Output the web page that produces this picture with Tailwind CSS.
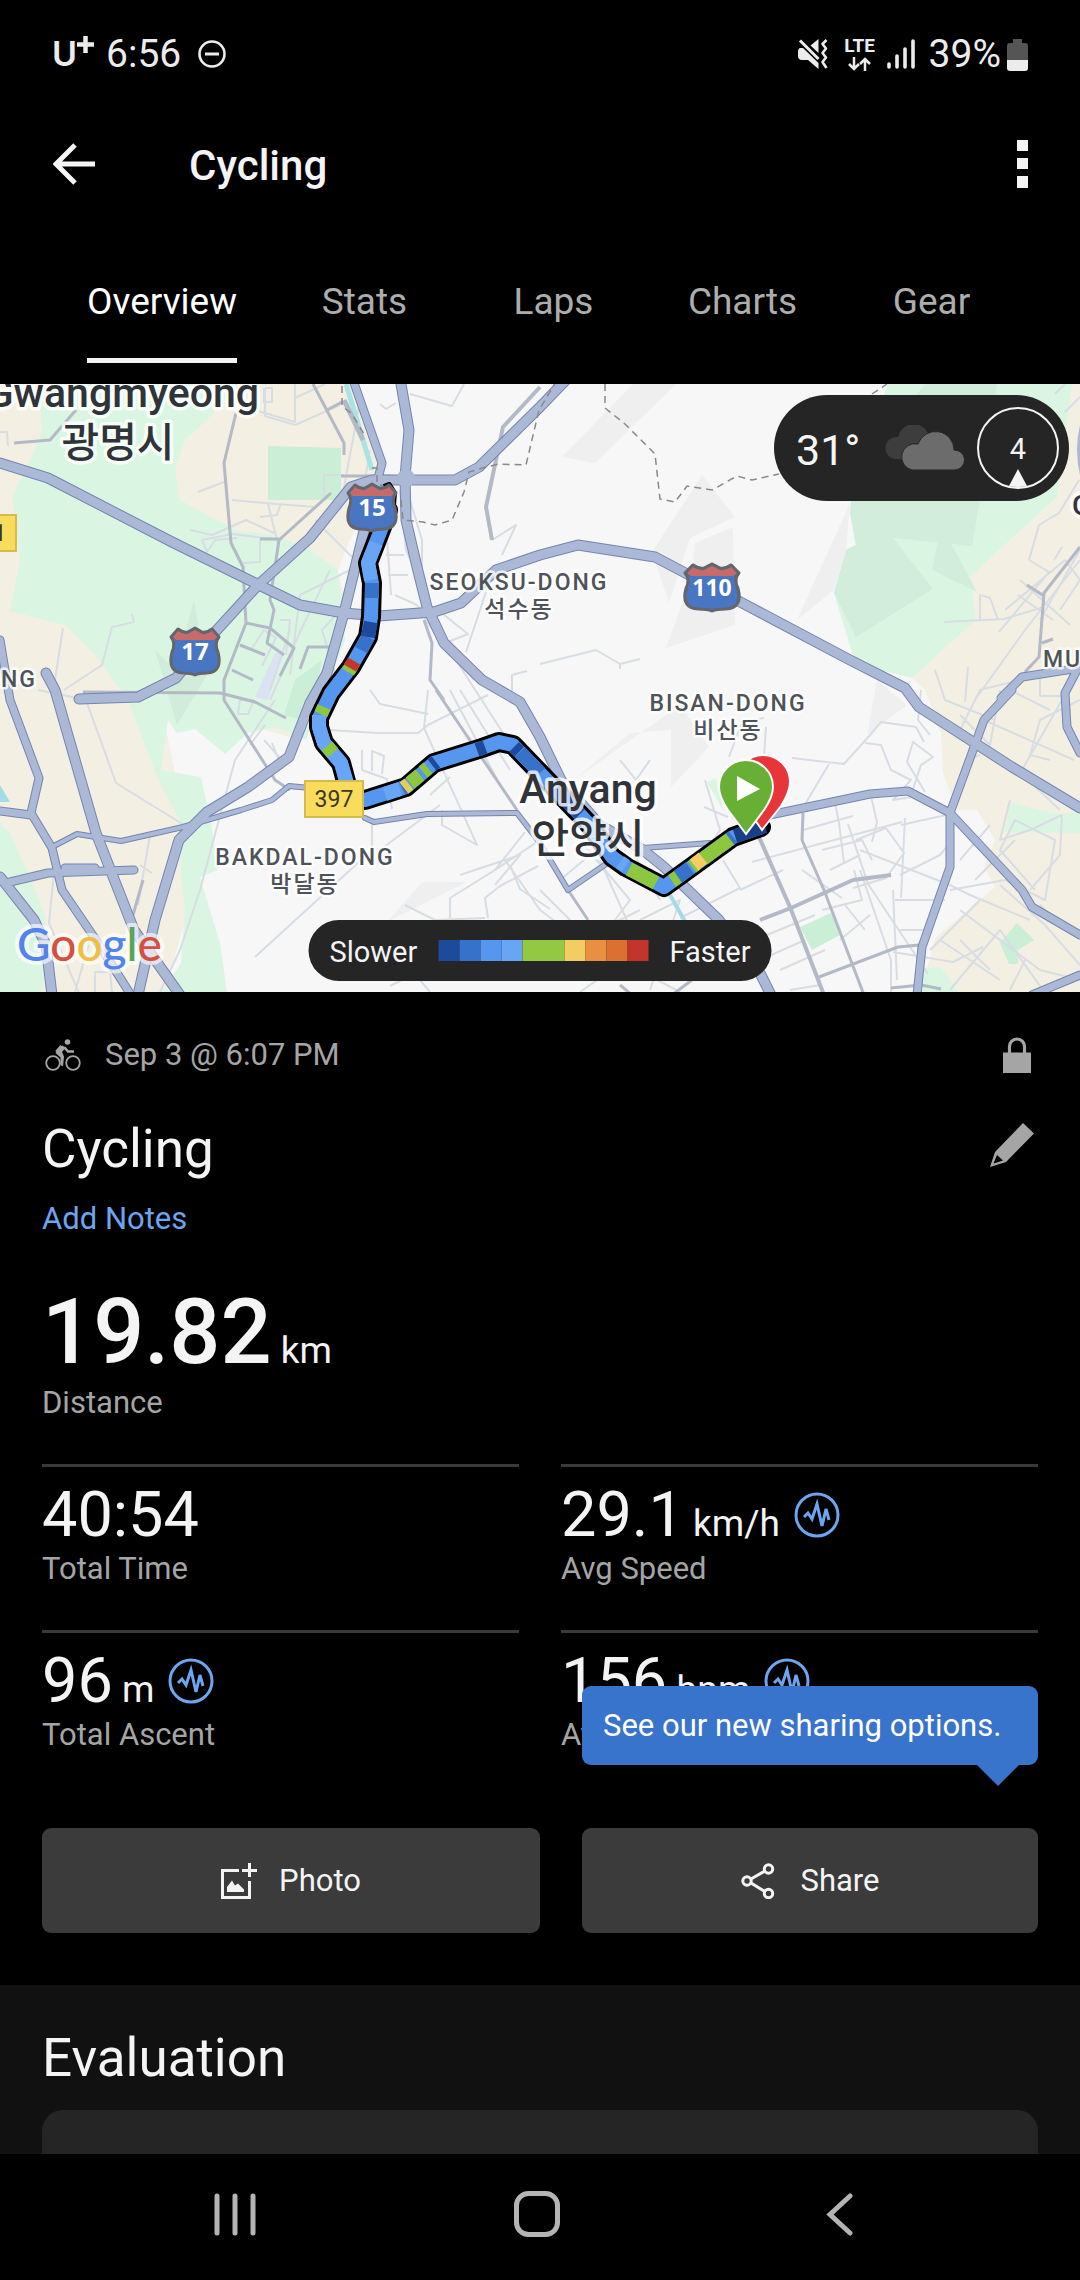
<!DOCTYPE html>
<html lang="en">
<head>
<meta charset="utf-8">
<meta name="viewport" content="width=device-width, initial-scale=1">
<title>Cycling</title>
<script src="https://cdn.jsdelivr.net/npm/@tailwindcss/browser@4"></script>
</head>
<body class="bg-black">
<div class="flex min-h-screen flex-col overflow-hidden bg-black font-[Roboto,'Noto_Sans_CJK_KR',sans-serif] text-[#f4f4f4]">

  <!-- Status bar -->
  <div class="flex h-[108px] items-center justify-between pl-[52px] pr-[52px] text-[39px] leading-[46px] text-[#ececec]">
    <div class="flex items-center">
      <span class="flex items-center font-[Inter,sans-serif] text-[34px] font-semibold">U<svg class="mb-5 size-[17px]" viewBox="0 0 17 17" aria-hidden="true"><path d="M8.500 0v17M0 8.500h17" stroke="#ececec" stroke-width="4.500"/></svg></span>
      <span class="ml-3">6:56</span>
      <svg class="ml-[17px] size-7" viewBox="0 0 28 28" fill="none" stroke="#ececec" aria-hidden="true"><circle cx="14" cy="14" r="12.500" stroke-width="2.600"/><path d="M7 14h14" stroke-width="3"/></svg>
    </div>
    <div class="flex items-center">
      <svg class="h-[30px] w-[30px]" viewBox="0 0 30 30" aria-hidden="true"><path d="M20.500 0v14L12.500 6.500zM2.500 9H5L20.500 24v6L10 21H4q-4 0-4-4v-4q0-4 2.500-4z" fill="#ececec"/><path d="M2 1.500l18.500 18.500" stroke="#ececec" stroke-width="3"/><path d="M28.500 1l-4 4 3.500 4.500-3.500 4.500 3.500 4.500-3.500 4.500 4 6" fill="none" stroke="#ececec" stroke-width="2.600" stroke-linejoin="round"/></svg>
      <div class="ml-4 flex w-[32px] flex-col items-center">
        <span class="text-[19px] font-bold leading-[16px]">LTE</span>
        <svg class="mt-[3px] h-[14px] w-[23px]" viewBox="0 0 23 14" fill="none" stroke="#ececec" stroke-width="2.500" aria-hidden="true"><path d="M6 0v12M1 7l5 5 5-5M17 14V2M12 7l5-5 5 5"/></svg>
      </div>
      <svg class="ml-[11px] h-[30px] w-7" viewBox="0 0 28 30" stroke="#ececec" stroke-width="3.600" stroke-linecap="round" aria-hidden="true"><path d="M2 25v3M10 17v11M18 10v18M26 2v26"/></svg>
      <span class="ml-[14px]">39%</span>
      <svg class="ml-[6px] h-[33px] w-[21px]" viewBox="0 0 21 33" aria-hidden="true"><path d="M6 1h9v4h3q3 0 3 3v15H0V8q0-3 3-3h3z" fill="#555"/><path d="M0 22h21v8q0 3-3 3H3q-3 0-3-3z" fill="#ececec"/></svg>
    </div>
  </div>

  <!-- App bar -->
  <header class="mb-5 flex h-[112px] items-center justify-between pl-[53px] pr-[52px]">
    <div class="flex items-center">
      <button type="button" aria-label="Back"><svg class="h-[42px] w-[43px]" viewBox="0 0 43 42" fill="none" stroke="#f4f4f4" stroke-width="5"><path d="M42 21H4M22 2L3 21l19 19"/></svg></button>
      <h1 class="ml-[93px] pt-[3px] text-[42px] font-medium leading-[50px]">Cycling</h1>
    </div>
    <button type="button" aria-label="More options"><svg class="h-[48px] w-[11px]" viewBox="0 0 11 48" fill="#f4f4f4"><path d="M0 0h11v11H0zM0 18h11v11H0zM0 36h11v12H0z"/></svg></button>
  </header>

  <!-- Tabs -->
  <nav class="mx-[54px] mb-[21px] grid h-[123px] grid-cols-[216fr_189fr_189fr_189fr_189fr] justify-items-center text-[37px] leading-[42px] text-[#adadad]">
    <a href="#overview" aria-current="page" class="flex items-center border-b-[5px] border-[#f4f4f4] pt-[5px] text-white">Overview</a>
    <a href="#stats" class="flex items-center">Stats</a>
    <a href="#laps" class="flex items-center">Laps</a>
    <a href="#charts" class="flex items-center">Charts</a>
    <a href="#gear" class="flex items-center">Gear</a>
  </nav>

  <!-- Route map -->
  <section class="relative h-[608px] overflow-hidden bg-[#f7f7f7]" aria-label="Route map">
    <svg class="h-full w-full" viewBox="0 384 1080 608" preserveAspectRatio="xMidYMid slice" role="img" aria-label="Map of Anyang">
      <defs>
        <g id="shield">
          <path d="M-17-22q5 4 10 3l7-4 7 4q5 1 10-3l7 8q-5 6-1 15 5 20-11 21-8 0-12 2-4-2-12-2-16-1-11-21 4-9-1-15z" fill="#4876c2" stroke="#64666b" stroke-width="3" stroke-linejoin="round"/>
          <path d="M-17-20q5 4 10 3l7-4 7 4q5 1 10-3l5 6-3 3h-38l-3-3z" fill="#c96a67"/>
        </g>
        <g id="highways">
          <path d="M0 463L48 478 172 542 255 583 300 605 344 613 379 616 434 612 461 603 496 570 540 555 578 545 655 557 712 587 850 660 905 688 919 707 1012 767 1080 808"/>
          <path d="M79 699L138 697 176 678 196 653 258 585 310 538 351 487 372 480 406 480 455 480 479 467 540 407 566 380"/>
          <path d="M401 384L409 430 405 477 406 520 417 567 427 607 444 643 482 680 520 702 540 737 561 780 600 825 643 850 664 867 719 920 760 973 771 995"/>
          <path d="M365 527L344 613 327 673 310 703 289 757 248 787 207 812 179 840 155 920 138 995"/>
          <path d="M46 673L55 690 96 833 134 930 180 995"/>
          <path d="M0 877L34 920 46 945 52 995"/>
        </g>
        <g id="arterials">
          <path d="M353 380L382 463 375 490"/>
          <path d="M0 640L10 700 39 778 31 813 52 848 62 890 96 940 131 995"/>
          <path d="M0 811L31 815M10 882L48 873 134 870M65 868h30"/>
          <path d="M765 816L870 794 908 791 950 813 1022 890 1032 907 1080 935"/>
          <path d="M1012 690L984 720 950 813 950 867 922 947 917 995"/>
          <path d="M1001 698L1022 677 1080 668M1077 670L1065 693 1067 727 1080 753M1032 995L1080 975"/>
        </g>
        <g id="connectors">
          <path d="M52 847L77 834 121 841 183 827 241 810 272 800 289 786 331 790M365 818L374 822 427 814 517 813 540 843 568 890 612 860M643 848L710 843M310 535L290 558"/>
        </g>
      </defs>

      <!-- Land cover -->
      <path d="M0 384H352L380 465 372 495 350 540 338 570 345 600 300 740 160 700 185 823 188 910 165 992H0z" fill="#f4efe3"/>
      <path d="M40 405L42 432 30 460 12 497 20 560 10 611 65 625 95 655 117 685 127 697 157 777 181 823 181 877 185 910 181 963 162 992H227L220 943 200 877 218 870 211 823 201 777 161 770 168 720 177 733 195 729 225 754 248 733 275 727 306 740 325 690 345 640 338 570 310 550 275 535 235 530 180 500 175 470 185 440 205 422 240 384H60z" fill="#daf6e3"/>
      <path d="M0 823L10 833 21 857 38 897 45 917V977L40 992H0z" fill="#daf6e3"/>
      <path d="M268 446L341 448V500H268zM284 715L295 680 322 660 310 722z" fill="#caeed6"/>
      <path d="M0 785l10 17H0z" fill="#a3dbe9"/>
      <path d="M194 600l13 75-30 50-22-75 20 20z" fill="#d1ecda"/>
      <path d="M255 697L275 653H284L268 700z" fill="#dbe2f3"/>
      <path d="M1070 384H1080V992H920L936 937 995 887 984 867 995 840 977 810H957L943 773 941 733 925 690 912 678 970 577 1057 497z" fill="#f4efe3"/>
      <path d="M888 384H1072L1057 497 970 577 976 620 912 678 860 665 852 653 834 593 846 550 856 545 850 513 853 480z" fill="#daf6e3"/>
      <path d="M925 384H997L985 470 972 546 893 538 933 589 856 637 834 593 846 550 856 545 850 513 853 480zM941 525L977 592 932 570z" fill="#d2eddc"/>
      <path d="M1010 803L1062 815 1080 810V833L1005 832zM924 968L941 967 958 992H920zM707 782L716 778 724 812z" fill="#daf6e3"/>
      <path d="M800 927L831 913 840 935 812 950zM1017 923L1034 940 1018 950V964H1009L1000 943z" fill="#caeed6"/>
      <path d="M633 384H676L595 463 562 457zM702 475L735 517 690 538 669 603 652 552zM695 543L733 527 735 625 666 648 691 580zM850 503L797 620 834 590 846 550zM574 780L630 733 671 730V787L709 747 680 705zM422 882h45l-80 40zM867 735l10-55 30 25z" fill="#efefef"/>
      <path d="M1080 425q-6 25 0 50z" fill="#abb9d6"/>

      <!-- Streets -->
      <g fill="none" stroke="#d8dde3" stroke-width="2" stroke-linejoin="round">
        <path d="M265 388v28l30 9 45-20M295 384v38l-30-9-20-6M265 388h7v14h-8v-14M0 432h7l1 14M295 398l30-14M380 404l6 5 10-6M410 394l42 12 12-22"/>
        <path d="M198 492l26-10M232 500l45 4 38 3M260 517l17-2 4-12M190 530l22 5 34-15 28 13M202 540l30-6 50 6M202 540l5 12 8-12 22-2M260 540v22l-17 1M268 504l10 40M324 500v-25h20M340 510l20-110M360 510l10-60"/>
        <path d="M315 520l45 45-60 30-10 80M330 570l-30 62-30 68M360 520l-10 80-28 30 15 50M280 620h10l-4 35M252 648l12-18 12 8-14 28M270 690l20-60M240 700h14l-6 14h-10z"/>
        <path d="M55 680L63 628M64 690l38-25 10-38 22-5-2-8M83 692l33 91 68 42M63 695l-25-5M85 700l-22-5"/>
        <path d="M275 700l-40 60-35 130-20 60-20 42M150 835l-12 70M54 873l-5 50 30 70M140 865l12 8M95 992v-20h15l2 20M90 940l-15 52"/>
        <path d="M265 725l-15 20M264 740l16 18-10 15 12-5-10-25M328 730l50 3h40l10-8 60-30M370 690l10 14 48 10M428 690l-4 38 53 117-35-20v-15M362 750v20l25 9 5 30M372 771v-20l12 5-2 18M372 822v30M372 850l-117 107M380 850l60-45M430 795l20-18"/>
        <path d="M386 525l5 70M386 555h18M388 575h20M395 595l22 10 12 20 45 55M410 500l12 40v30M400 490l6 60 50 110 45 70 20 30"/>
        <path d="M450 690l50 95 40 60M460 690l50 80M492 540l24-15-14 30M466 652l20-60M448 642l20-8-25-20M512 697v-22l15-4"/>
        <path d="M540 664l56-14 24 14 20-5M620 664v5"/>
        <path d="M405 905l30 15 50-2M450 918v-20l45-28 30-38M488 918l-3-20 15-12 38-20M460 875l60-20-25 30M510 865l10 24 30 20M495 870l45-30M505 860l35 50 40 30 60-30"/>
        <path d="M540 890l60 60 80 42M580 840l50 60-30 40M600 860l40 90-60 42M560 880l60-50M640 920l40-20-30 90M390 986l20-10M430 992l-15-18M620 830l40 70"/>
        <path d="M620 760l16 20 14-20M729 757l13-35 22-4M754 757h10l2-30M705 780l15 50-18 28M704 807l24 10M792 758l52 6 27-30 10-12 35 5 8 15M829 764L804 806M865 743l16 2 10 25 20 10-18 20 30-5M911 795l10-30 12-8-20-15-6 20 18 30M921 690l-3 30 12 15"/>
        <path d="M723 860l17 28-60 30M740 890l43-20M752 862l150-40M803 830l50-14M834 798l5 25 5 40M870 792l7 30-5 20M905 818l-4 80M901 825l45-10M848 824l20 60 60 90M856 840l30-12 18 25-18 25-33 10M822 850l40-10 10 20M830 870l30-15M802 870l40 28M860 870l31 90v32M822 910l40-10-8-30"/>
        <path d="M893 890l4 90M895 900h50M900 930h28M893 952l60 10 30-15M900 875l40-20 10-12M860 850l90 35 20 10 60 25M755 940l60-25M760 960l45-20M780 970l45-20M790 990l30-5M840 940l30-25M845 905l20 25"/>
        <path d="M950 890l55-10 40 20 10-60-40-20-15 30 35 40M960 860l30-35M975 880l40-40M1010 800l-10 40 30-10 32-15-2 40-30 35M1028 780l32 30M1062 700l-40 70M1080 700l-40 20-10 35 20 5"/>
        <path d="M950 990l50-60 50 70M940 940l60 40M960 910l80 60 40 10M980 900l-50 50M990 970l-30-30M1000 885l45 40 35 40M1040 905l15 15M1010 990l15-30"/>
        <path d="M984 720l90 40M960 715l30 30 10-55M975 700l50-70 55-70M965 760l15-5M960 730l20-40 40-10M935 670l10 30 50 20M968 667l-3 35M1010 690l40 20M1040 670v26h25"/>
        <path d="M944 622l60-3 40-12M980 620v-25l10 3 8 22M1029 560l10-35 20-12 20-33M1029 560l20 12-50 60M1018 595l35 25M1005 610l60-50 15 20-20 30M1020 580l50 45M1040 620l40-70M1054 560l8-13M1065 412l15-15M1055 394l10-10"/>
      </g>
      <g fill="none" stroke="#b3b9c6" stroke-width="3" stroke-linejoin="round">
        <path d="M236 413L224 463 231 543 243 567 246 623 224 680V700L275 780 290 790M331 493L279 540 270 600 274 610 267 643 284 655M260 539h19M246 623l24 5 24 20-14 28M240 645l25 10M232 670l21 10M83 692L220 693 255 702 286 718M76 410L50 440 14 443M313 384L344 443v12M327 410l15-8M341 476h50M436 690L517 810M424 620L432 643 430 680 444 700M330 647h-22l-8 22M143 880l-10 35"/>
        <path d="M803 813L802 840 824 890 864 995M819 977L898 947 919 945M891 988l30-3 20 4M1080 547L1044 593 1039 657 1025 672M1027 585l17 11M1042 643l11-4M568 890l20 30M620 985l12 10h40l20-15"/>
        <path d="M759 837L790 907 824 995M760 920L791 908 853 880 891 875M540 387L503 427 486 507 492 540" stroke-width="4"/>
      </g>
      <path d="M346 384L372 470" stroke="#a9e4e2" stroke-width="5"/>
      <path d="M344 400L363 440" stroke="#b3b9c6" stroke-width="5"/>
      <path d="M670 895L687 925" stroke="#a3dbe9" stroke-width="4"/>

      <!-- Major roads: casing under fill -->
      <g fill="none" stroke="#7485b0" stroke-linejoin="round" stroke-linecap="round">
        <use href="#connectors" stroke-width="6"/><use href="#arterials" stroke-width="9"/><use href="#highways" stroke-width="11"/>
      </g>
      <g fill="none" stroke="#abb9d6" stroke-linejoin="round" stroke-linecap="round">
        <use href="#connectors" stroke-width="4"/><use href="#arterials" stroke-width="7"/><use href="#highways" stroke-width="9"/>
      </g>
      <circle cx="406" cy="478" r="9" fill="#abb9d6"/>

      <!-- District borders -->
      <g fill="none" stroke="#88898c" stroke-width="1.500" stroke-dasharray="7 5">
        <path d="M342 386v20l10 8 12 20M372 468h5v15l8 5M401 500l2 20 20 2 12 3 17-5 12-28 5-20 17-5 13-3 27 1 13-55 15-25 13-25 20-12 5-16M605 384v24l20 16 30 30 5 45 15 3 12-16 25 4 25-14 15 4 27-6M872 394l15-10"/>
      </g>

      <!-- Recorded track -->
      <g fill="none" stroke-linejoin="round">
        <path d="M384 487L389 485 394 493 393 505" stroke="#000" stroke-width="6"/>
        <path d="M388 510L382 527 368 563 372 583 371 617 368 637 351 667 331 693 319 718 319 727 324 743 341 763 351 800H365L406 787 434 763 482 748 499 742 513 745 540 773 588 823 612 857 626 867 664 887 733 837 761 827" stroke="#000" stroke-width="20" stroke-linecap="round"/>
        <path d="M388 510L382 527 368 563 372 583 371 617 368 637 351 667 331 693 319 718 319 727 324 743 341 763 351 800H365L406 787 434 763 482 748 499 742 513 745 540 773 588 823 612 857 626 867 664 887 733 837 762 827" stroke="#5596ee" stroke-width="14"/>
        <g stroke-width="14">
          <path d="M376 543L368 563 371 580M319 715v12l5 16 17 20 6 20M385 794l15-5M620 862l6 4" stroke="#68a5f5"/>
          <path d="M372 583v15M368 637l-7 13M520 752l20 21M408 785l-6 3M690 868l-15 11M725 843l8-6" stroke="#3672ca"/>
          <path d="M371 622L368 637M477 750l8-3M436 762l-4 3M514 747l5 5M555 789l25 25" stroke="#1d4a9b"/>
          <path d="M352 665l-4 7M324 707l-3 7M327 746l6 7M410 783l10-8M423 772l5-4M629 869l27 14M672 881l6-4M692 867l4-3M703 859l27-20" stroke="#8dc63f"/>
          <path d="M694 865l9-7" stroke="#f3cd62"/>
          <path d="M354 661l-4 7" stroke="#c5352b"/>
          <path d="M404 788l5-4" stroke="#e4cf55"/>
          <path d="M735 836L765 826" stroke="#193f86"/>
        </g>
      </g>

      <!-- Route shields -->
      <g font-family="Open Sans, sans-serif" font-weight="700" font-size="24" fill="#fff" text-anchor="middle">
        <use href="#shield" x="372" y="507"/><text x="372" y="516">15</text>
        <use href="#shield" x="195" y="651"/><text x="195" y="660">17</text>
        <use href="#shield" transform="translate(712 587) scale(1.120 1)"/><text x="712" y="596" font-size="23">110</text>
      </g>
      <g fill="#f9dc5c" stroke="#d4bb4f" stroke-width="2"><path d="M305 781h58v36h-58zM-30 515h46v36h-46z"/></g>
      <g font-size="23" fill="#3a391f" text-anchor="middle"><text x="334" y="807">397</text><text x="0" y="541">1</text></g>

      <!-- Place names -->
      <g fill="#303338" stroke="#fff" stroke-opacity=".8" stroke-width="7" stroke-linejoin="round" paint-order="stroke" text-anchor="middle" font-weight="500">
        <g font-size="41">
          <text x="259" y="407" text-anchor="end">Gwangmyeong</text><text x="118" y="457">광명시</text>
          <text x="588" y="803">Anyang</text><text x="588" y="853">안양시</text>
        </g>
        <text x="1072" y="515" font-size="28" text-anchor="start">G</text>
        <g font-size="23" fill="#4f5358" stroke-width="5" class="tracking-[2px]">
          <text x="519" y="590">SEOKSU-DONG</text><text x="519" y="617">석수동</text>
          <text x="728" y="711">BISAN-DONG</text><text x="728" y="738">비산동</text>
          <text x="305" y="865">BAKDAL-DONG</text><text x="305" y="892">박달동</text>
          <text x="37" y="687" text-anchor="end">NG</text><text x="1043" y="667" text-anchor="start">MU</text>
        </g>
      </g>

      <!-- Finish and start pins -->
      <g stroke="#fff" stroke-width="2">
        <path d="M762 830l-17-24q-9-14-9-24a27 27 0 0 1 54 0q0 10-9 24z" fill="#e83539"/>
        <path d="M746 834l-18-24q-9-13-9-23a27 27 0 0 1 54 0q0 10-9 23z" fill="#68b035"/>
      </g>
      <path d="M737 776v25l23-12z" fill="#fff"/>

      <text x="17" y="961" font-family="Lato, sans-serif" font-size="46" font-weight="500" stroke="#fff" stroke-opacity=".65" stroke-width="8" stroke-linejoin="round" paint-order="stroke"><tspan fill="#5383ec">G</tspan><tspan fill="#d65040">o</tspan><tspan fill="#f0bf42">o</tspan><tspan fill="#5383ec">g</tspan><tspan fill="#58a55c">l</tspan><tspan fill="#d65040">e</tspan></text>
    </svg>

    <!-- Weather -->
    <div class="absolute right-[11px] top-[11px] flex h-[106px] w-[295px] items-center justify-between rounded-full bg-[#252525] pl-[22px] pr-[10px]">
      <span class="pt-[3px] text-[43px] leading-[50px]">31°</span>
      <div class="flex items-center gap-3">
        <svg class="h-[46px] w-[82px]" viewBox="0 0 82 46" aria-label="Cloudy"><path d="M12 34a11 11 0 0 1 3-22A16 16 0 0 1 45 8L30 34z" fill="#3d3d3d"/><path d="M29 45a13 13 0 1 1 6-26 18.500 18.500 0 0 1 36 6 10 10 0 0 1 1 20z" fill="#6c6c6c" stroke="#252525" stroke-width="1"/></svg>
        <div class="relative flex size-[82px] items-center justify-center rounded-full border-[2px] border-[#f4f4f4] pt-[3px] text-[29px]">4
          <svg class="absolute bottom-0 left-1/2 h-[18px] w-5 -translate-x-1/2" viewBox="0 0 20 18" aria-hidden="true"><path d="M10 0l9 17q-9 2-18 0z" fill="#f4f4f4"/></svg>
        </div>
      </div>
    </div>

    <!-- Speed legend -->
    <div class="absolute bottom-[11px] left-1/2 flex h-[61px] w-[463px] -translate-x-1/2 items-center justify-between rounded-full bg-[#252525] px-[21px] text-[29px] leading-[36px]">
      <span class="pt-[3px]">Slower</span>
      <div class="flex h-[21px]" aria-hidden="true">
        <i class="w-[21px] bg-[#1d4a9b]"></i><i class="w-[21px] bg-[#3672ca]"></i><i class="w-[21px] bg-[#5596ee]"></i><i class="w-[21px] bg-[#68a5f5]"></i><i class="w-[42px] bg-[#93c842]"></i><i class="w-[21px] bg-[#f3cd62]"></i><i class="w-[21px] bg-[#e98f40]"></i><i class="w-[21px] bg-[#db7030]"></i><i class="w-[21px] bg-[#c2352d]"></i>
      </div>
      <span class="pt-[3px]">Faster</span>
    </div>
  </section>

  <!-- Activity summary -->
  <main class="px-[42px] pb-[52px] pt-[43px]">
    <div class="flex h-10 items-center justify-between pr-[7px]">
      <div class="flex items-center text-[31px] leading-[40px] text-[#a5a5a5]">
        <svg class="ml-[3px] h-8 w-9" viewBox="0 0 36 32" fill="none" stroke="#a5a5a5" aria-hidden="true"><circle cx="8" cy="24" r="6.800" stroke-width="1.800"/><circle cx="28" cy="24" r="6.800" stroke-width="1.800"/><circle cx="22.500" cy="3" r="2.800" fill="#a5a5a5" stroke="none"/><path d="M17 7.500L12 13.500" stroke-width="4.500" stroke-linejoin="round"/><path d="M17 6.500L21 8.500 17 13 19 17.500 18 27.500 15.500 26 15.500 18.500 10.500 14z" fill="#a5a5a5" stroke="none"/><path d="M19.500 8.500L23 12.500H29" stroke-width="2.500"/></svg>
        <span class="ml-6">Sep 3 @ 6:07 PM</span>
      </div>
      <svg class="h-9 w-7" viewBox="0 0 28 36" aria-label="Private"><path d="M0 15.500h28V36H0z" fill="#a5a5a5"/><path d="M6.500 16V9.500a7.500 7.500 0 0 1 15 0V16" fill="none" stroke="#a5a5a5" stroke-width="3.200"/></svg>
    </div>

    <div class="mt-[42px] flex h-16 items-center justify-between pr-1">
      <h2 class="text-[53px] leading-[64px]">Cycling</h2>
      <button type="button" aria-label="Edit title" class="mb-2"><svg class="size-[44px]" viewBox="0 0 44 44"><path d="M33 0L44 10.500 16 39 0 44 5 29zM7 32L3.500 40.500 13 37.500z" fill="#a5a5a5" fill-rule="evenodd"/></svg></button>
    </div>
    <a href="#notes" class="mt-[18px] block w-fit text-[31px] leading-[40px] text-[#6ca5f0]">Add Notes</a>

    <dl class="flex flex-col-reverse pb-[41px] pt-[50px]">
      <dt class="mt-[6px] text-[31px] leading-[40px] text-[#a5a5a5]">Distance</dt>
      <dd class="h-[88px] text-[90px] font-medium leading-[88px]">19.82<span class="text-[37px] font-normal leading-none"> km</span></dd>
    </dl>

    <dl class="grid grid-cols-2 gap-x-[42px] text-[31px] leading-[40px] text-[#a5a5a5]">
      <div class="flex flex-col-reverse border-t-[3px] border-[#3a3a3a] pb-[41px] pt-4">
        <dt class="mt-[2px]">Total Time</dt>
        <dd class="flex h-16 items-center text-[63px] leading-[64px] text-[#f4f4f4]">40:54</dd>
      </div>
      <div class="flex flex-col-reverse border-t-[3px] border-[#3a3a3a] pb-[41px] pt-4">
        <dt class="mt-[2px]">Avg Speed</dt>
        <dd class="flex h-16 items-center gap-[14px] text-[63px] leading-[64px] text-[#f4f4f4]"><span>29.1<span class="text-[37px] leading-none"> km/h</span></span>
          <button type="button" aria-label="Speed chart"><svg class="size-[46px]" viewBox="0 0 46 46" fill="none" stroke="#6ca5f0"><circle cx="23" cy="23" r="21" stroke-width="3"/><path d="M10 25l4-4 4 6 5-15 5 22 4-17 3 11" stroke-width="3"/></svg></button></dd>
      </div>
      <div class="flex flex-col-reverse border-t-[3px] border-[#3a3a3a] pb-[41px] pt-4">
        <dt class="mt-[2px]">Total Ascent</dt>
        <dd class="flex h-16 items-center gap-[14px] text-[63px] leading-[64px] text-[#f4f4f4]"><span>96<span class="text-[37px] leading-none"> m</span></span>
          <button type="button" aria-label="Elevation chart"><svg class="size-[46px]" viewBox="0 0 46 46" fill="none" stroke="#6ca5f0"><circle cx="23" cy="23" r="21" stroke-width="3"/><path d="M10 25l4-4 4 6 5-15 5 22 4-17 3 11" stroke-width="3"/></svg></button></dd>
      </div>
      <div class="flex flex-col-reverse border-t-[3px] border-[#3a3a3a] pb-[41px] pt-4">
        <dt class="mt-[2px]">Avg HR</dt>
        <dd class="flex h-16 items-center gap-[14px] text-[63px] leading-[64px] text-[#f4f4f4]"><span>156<span class="text-[37px] leading-none"> bpm</span></span>
          <button type="button" aria-label="Heart rate chart"><svg class="size-[46px]" viewBox="0 0 46 46" fill="none" stroke="#6ca5f0"><circle cx="23" cy="23" r="21" stroke-width="3"/><path d="M10 25l4-4 4 6 5-15 5 22 4-17 3 11" stroke-width="3"/></svg></button></dd>
      </div>
    </dl>

    <div class="mt-8 grid grid-cols-[498fr_456fr] gap-[42px] text-[31px] leading-[40px]">
      <button type="button" class="flex h-[105px] items-center justify-center gap-[22px] rounded-[9px] bg-[#3b3b3b]">
        <svg class="size-9" viewBox="0 0 36 36" fill="none" stroke="#f4f4f4" aria-hidden="true"><path d="M18 7.500H1.500V34.500H28.500V18" stroke-width="3"/><path d="M28.500 0v14M21 7.500h15" stroke-width="3"/><path d="M6 29v-5l5-6.500 3 5 3-2 6 6V29z" fill="#f4f4f4" stroke="none"/></svg>
        Photo
      </button>
      <div class="relative grid">
        <button type="button" class="flex h-[105px] items-center justify-center gap-[26px] rounded-[9px] bg-[#3b3b3b]">
          <svg class="h-9 w-[34px]" viewBox="0 0 34 36" fill="none" stroke="#f4f4f4" stroke-width="3" aria-hidden="true"><circle cx="6" cy="18" r="4.200"/><circle cx="27.500" cy="6" r="4.200"/><circle cx="27.500" cy="30.500" r="4.200"/><path d="M10 16L24 8M10 20L24 28.500"/></svg>
          Share
        </button>
        <div role="tooltip" class="absolute inset-x-0 bottom-full mb-[63px] flex h-[79px] items-center rounded-[9px] bg-[#3873cc] pl-[21px] pr-5 text-white">
          See our new sharing options.
          <svg class="absolute right-[19px] top-full h-[21px] w-[42px]" viewBox="0 0 42 21" aria-hidden="true"><path d="M0 0h42L21 21z" fill="#3873cc"/></svg>
        </div>
      </div>
    </div>
  </main>

  <!-- Evaluation -->
  <section class="flex flex-1 flex-col bg-[#111] px-[42px] pt-[41px]">
    <h2 class="text-[53px] leading-[64px]">Evaluation</h2>
    <div class="mt-5 min-h-[44px] flex-1 rounded-t-[21px] bg-[#252525]"></div>
  </section>

  <!-- System navigation -->
  <nav class="grid h-[126px] grid-cols-[1fr_302px_1fr] items-center bg-black pb-[6px]" aria-label="System">
    <button type="button" aria-label="Recent apps" class="justify-self-end pr-[133px]"><svg class="h-[43px] w-[42px]" viewBox="0 0 42 43" stroke="#b4b4b4" stroke-width="5" stroke-linecap="round"><path d="M3 3v37M21 3v37M39 3v37"/></svg></button>
    <button type="button" aria-label="Home" class="justify-self-center pr-[6px]"><svg class="size-[46px]" viewBox="0 0 46 46" fill="none" stroke="#b4b4b4" stroke-width="5"><rect x="2.500" y="2.500" width="41" height="41" rx="12"/></svg></button>
    <button type="button" aria-label="Back" class="justify-self-start pl-[134px]"><svg class="h-[43px] w-7" viewBox="0 0 28 43" fill="none" stroke="#b4b4b4" stroke-width="5" stroke-linecap="round" stroke-linejoin="miter"><path d="M25 3L5 21.500 25 40"/></svg></button>
  </nav>
</div>
</body>
</html>
